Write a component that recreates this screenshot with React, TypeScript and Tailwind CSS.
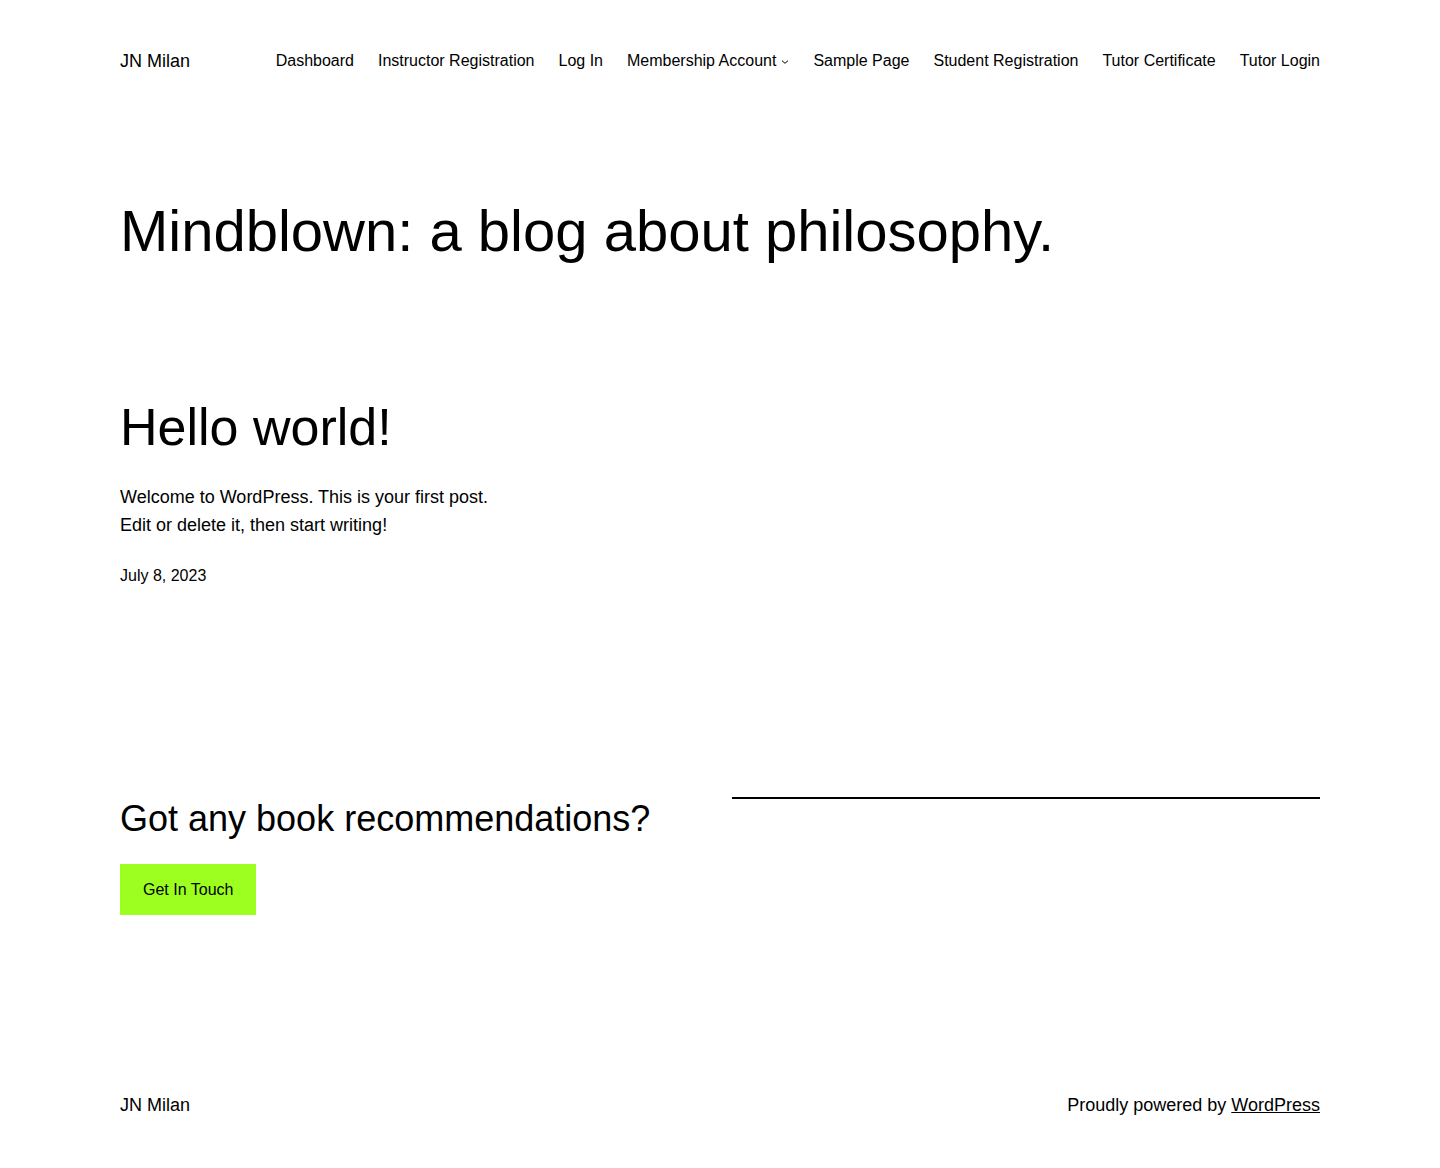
const navItems = [
  'Dashboard',
  'Instructor Registration',
  'Log In',
  'Membership Account',
  'Sample Page',
  'Student Registration',
  'Tutor Certificate',
  'Tutor Login',
]

function Chevron() {
  return (
    <svg width="8" height="8" viewBox="0 0 12 12" className="ml-[5px] mt-[2px]" fill="none">
      <path d="M1.5 4l4.5 4 4.5-4" stroke="currentColor" strokeWidth="1.5" />
    </svg>
  )
}

export default function App() {
  return (
    <div className="min-h-[1168px] bg-white text-black font-['Liberation_Sans',Arial,sans-serif] flex flex-col">
      {/* Header */}
      <header className="px-[120px] pt-[48px] flex items-center justify-between">
        <a href="#" className="text-[18px] leading-[26px]">JN Milan</a>
        <nav className="flex items-center gap-[24px] text-[16px] leading-[26px]">
          {navItems.map((item) => (
            <a key={item} href="#" className="flex items-center">
              {item}
              {item === 'Membership Account' && <Chevron />}
            </a>
          ))}
        </nav>
      </header>

      <main className="px-[120px]">
        <h1 className="mt-[121px] text-[58px] leading-[72px]">
          Mindblown: a blog about philosophy.
        </h1>

        <article className="mt-[130px]">
          <h2 className="text-[52px] leading-[60px]">Hello world!</h2>
          <div className="mt-[26px] text-[18px] leading-[28px] max-w-[400px]">
            <p>Welcome to WordPress. This is your first post.</p>
            <p>Edit or delete it, then start writing!</p>
          </div>
          <p className="mt-[25px] text-[16px] leading-[24px]">July 8, 2023</p>
        </article>

        <section className="mt-[209px] grid grid-cols-2 gap-[24px]">
          <div>
            <h3 className="text-[36px] leading-[44px]">Got any book recommendations?</h3>
            <a
              href="#"
              className="mt-[23px] inline-block bg-[#9dff20] px-[23px] py-[15px] text-[16px] leading-[21px]"
            >
              Get In Touch
            </a>
          </div>
          <div>
            <hr className="border-0 border-t-2 border-black" />
          </div>
        </section>
      </main>

      <footer className="mt-auto px-[120px] pb-[49px] flex items-center justify-between text-[18px] leading-[28px]">
        <a href="#">JN Milan</a>
        <p>
          Proudly powered by{' '}
          <a href="#" className="underline">
            WordPress
          </a>
        </p>
      </footer>
    </div>
  )
}
